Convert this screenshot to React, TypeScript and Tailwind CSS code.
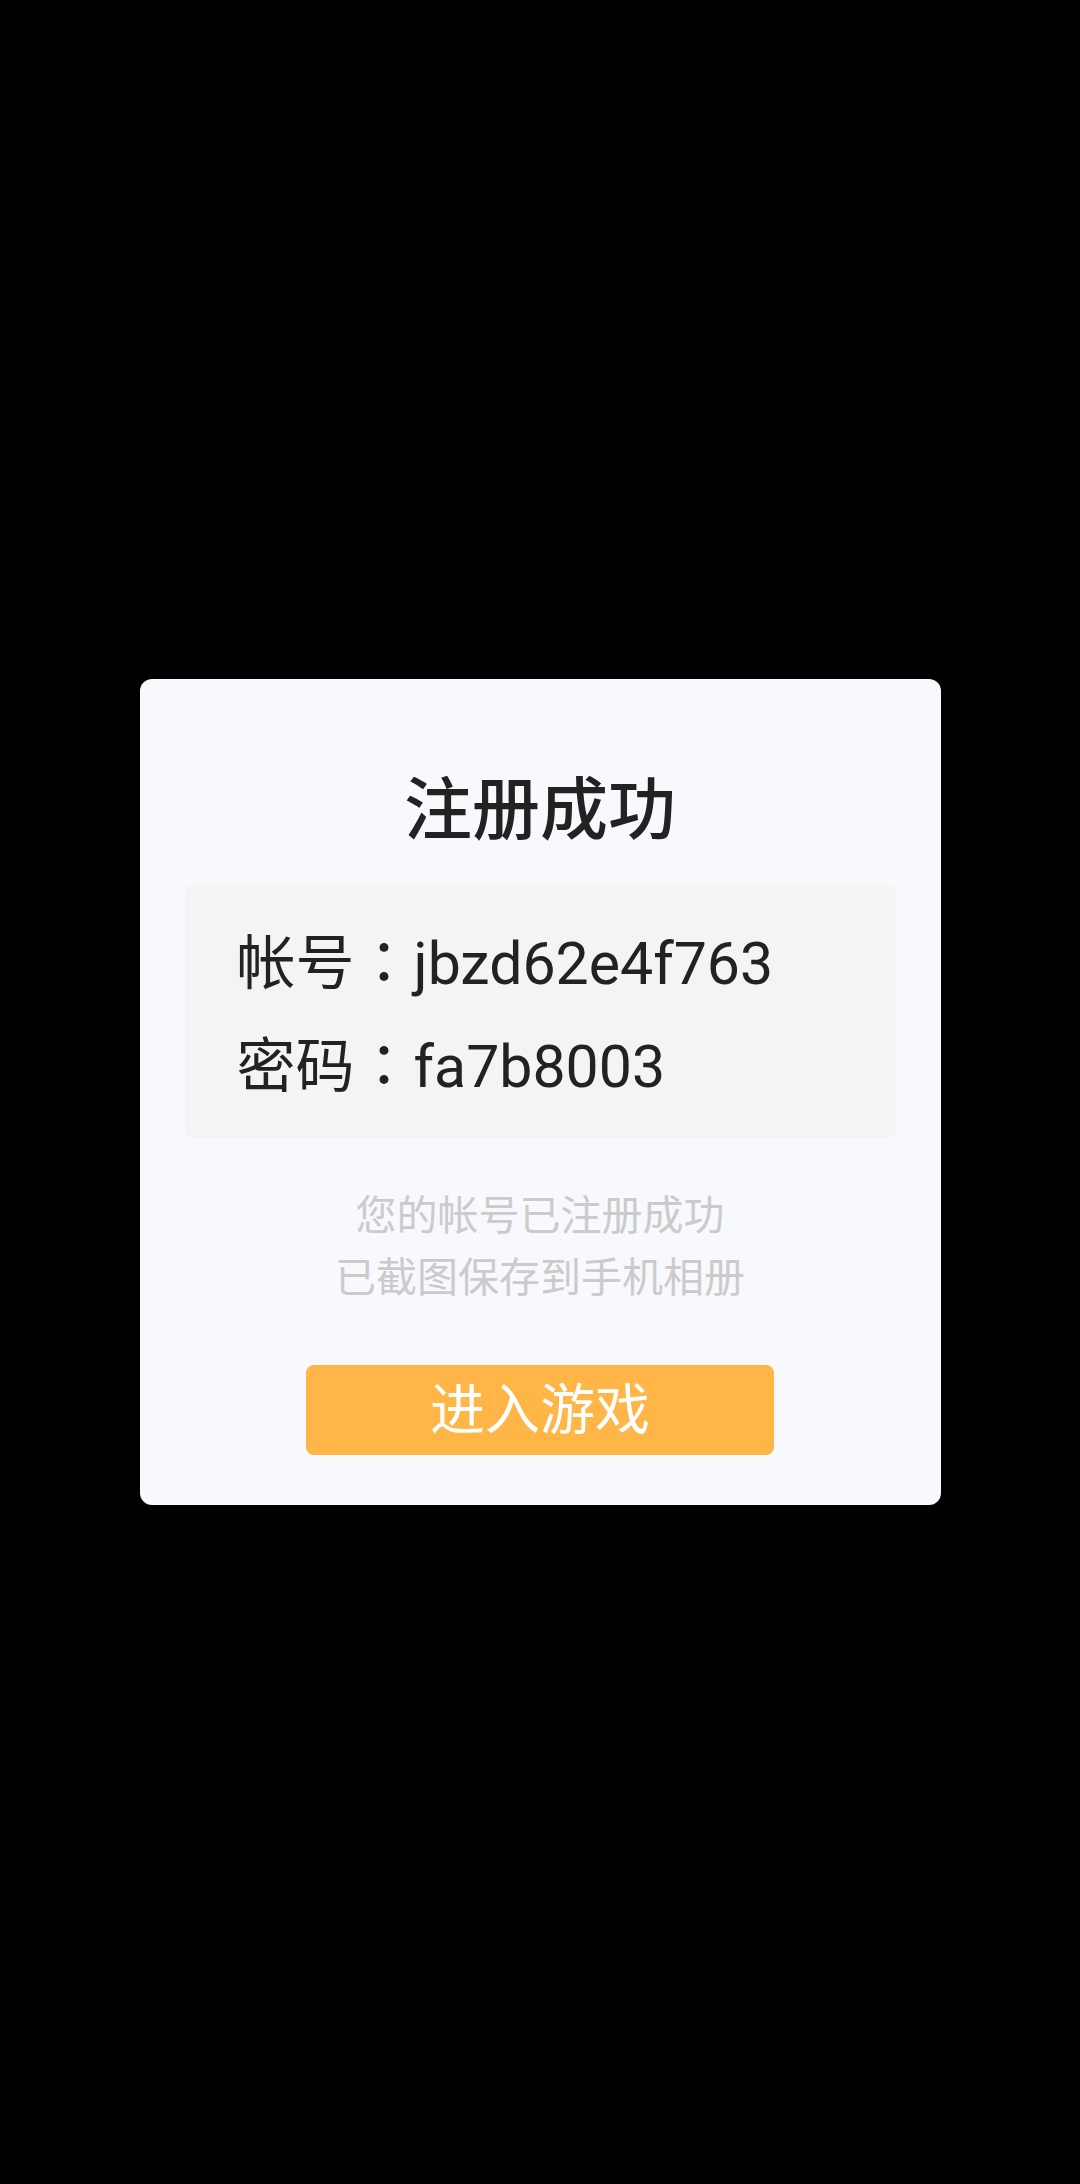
import React from "react";

export default function App() {
  const colon = (
    <span style={{ fontFamily: '"Noto Sans CJK TC", sans-serif' }}>：</span>
  );
  return (
    <div
      className="w-[1080px] h-[2184px] bg-black flex items-center justify-center"
      style={{ fontFamily: 'Roboto, "Noto Sans CJK SC", sans-serif' }}
    >
      <div className="w-[801px] bg-[#f8f9fd] rounded-[12px] pt-[88px] pb-[50px] px-[45px] flex flex-col items-center">
        <div className="h-[88px] leading-[88px] text-[68px] font-medium text-[#222222]">注册成功</div>
        <div className="mt-[30px] w-full h-[253px] bg-[#f4f4f4] rounded-[8px] pt-[22px] pl-[52px] text-[59px] text-[#222222]">
          <div className="h-[103px] leading-[103px]">帐号{colon}jbzd62e4f763</div>
          <div className="h-[103px] leading-[103px]">密码{colon}fa7b8003</div>
        </div>
        <div className="mt-[47px] text-[41px] leading-[62px] text-[#cbcbcb] text-center">
          <div>您的帐号已注册成功</div>
          <div>已截图保存到手机相册</div>
        </div>
        <div className="mt-[56px] w-[468px] h-[90px] bg-[#ffb646] rounded-[8px] flex items-center justify-center text-white text-[55px]">
          进入游戏
        </div>
      </div>
    </div>
  );
}
